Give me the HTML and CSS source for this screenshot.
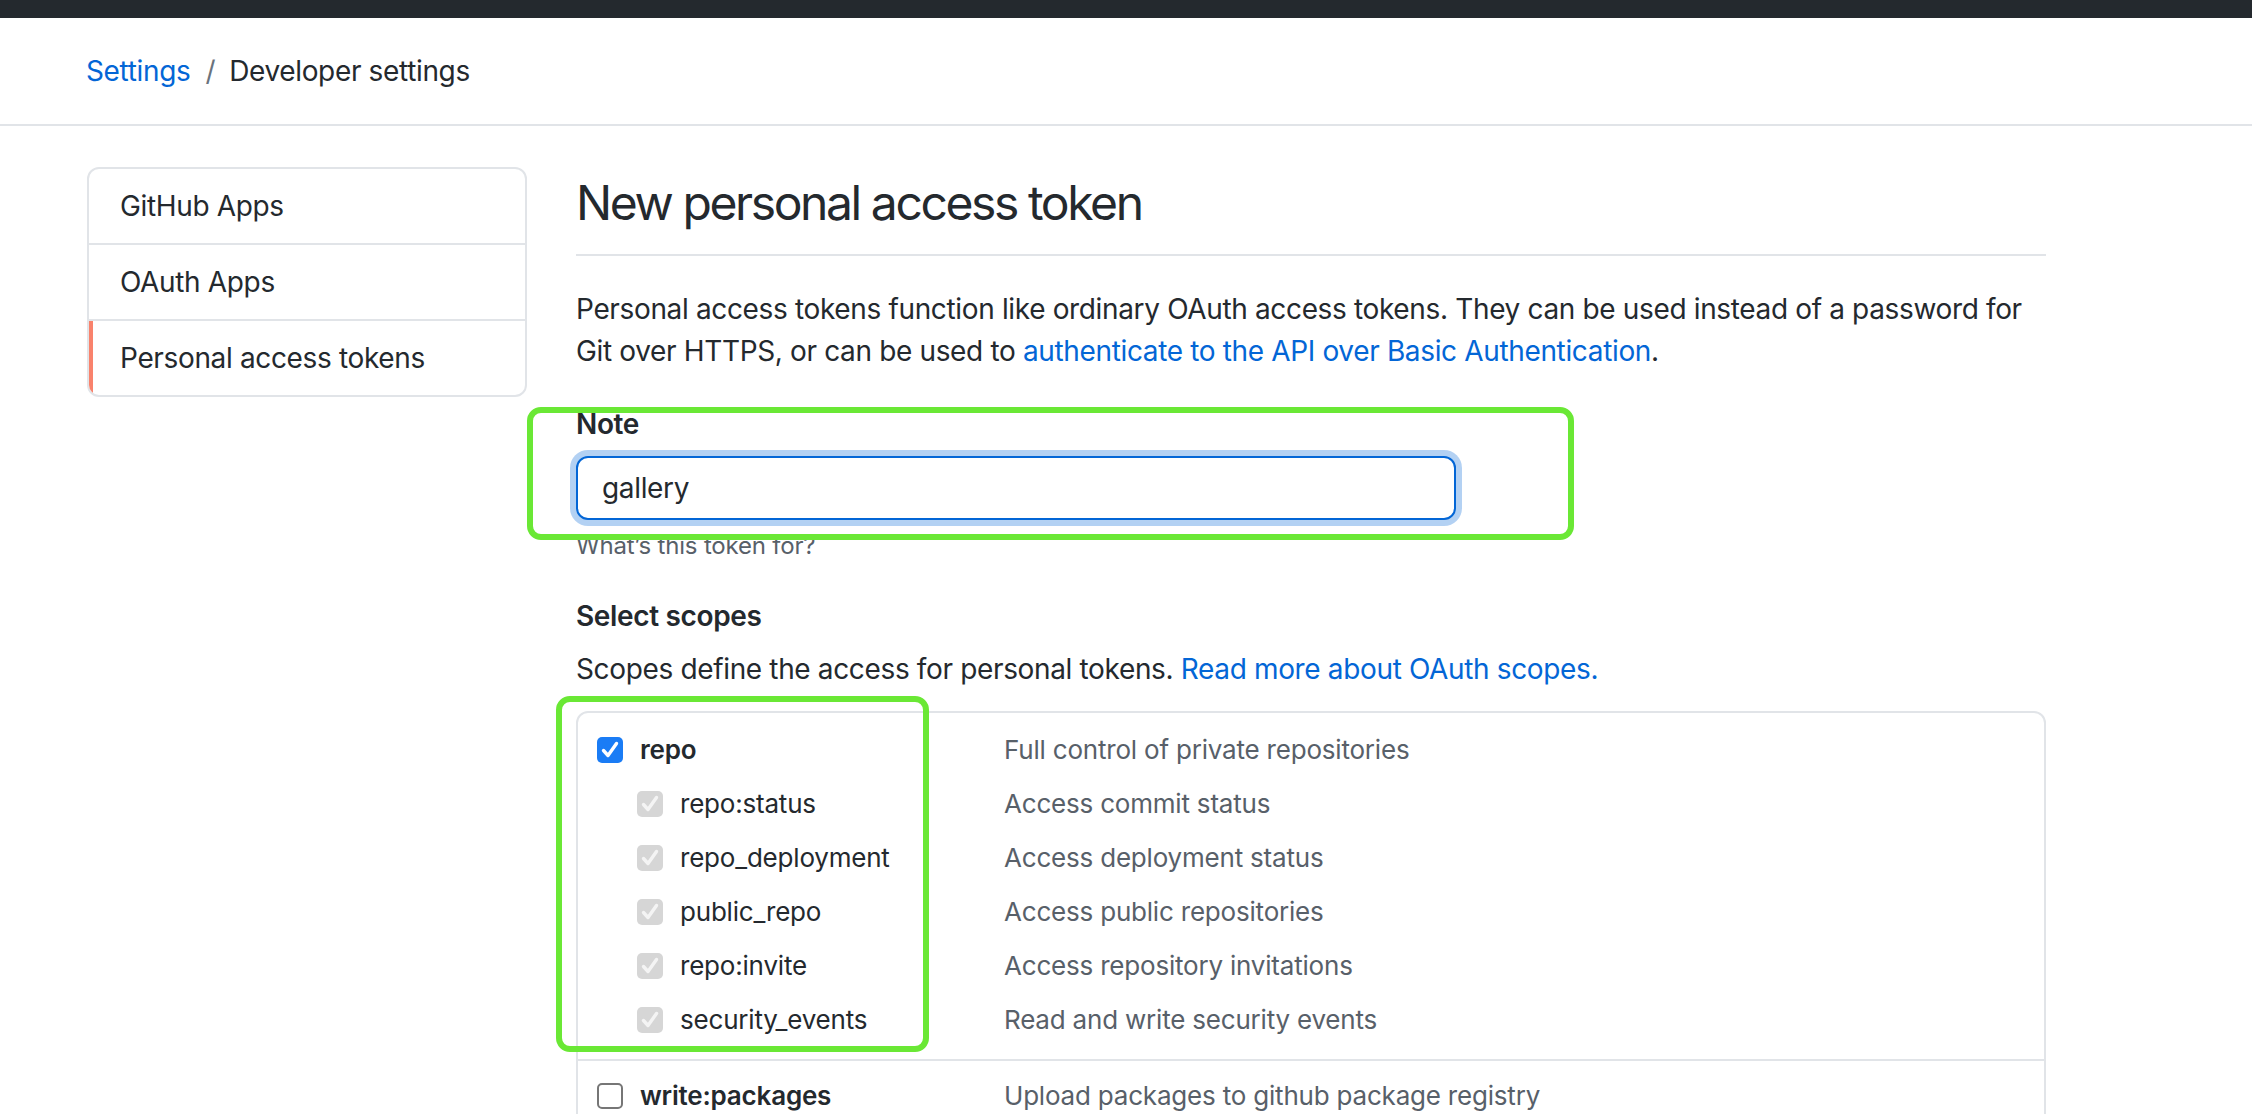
FILE: index.html
```html
<!DOCTYPE html>
<html lang="en">
<head>
<meta charset="utf-8">
<title>New personal access token</title>
<link rel="stylesheet" href="styles.css">
</head>
<body>
<div class="topbar"></div>
<div class="crumbbar">
  <nav class="crumbs">
    <a class="crumb-link" href="#">Settings</a>
    <span class="crumb-sep">/</span>
    <span class="crumb-current">Developer settings</span>
  </nav>
</div>
<div class="layout">
  <aside class="side">
    <nav class="menu">
      <a class="menu-item" href="#">GitHub Apps</a>
      <a class="menu-item" href="#">OAuth Apps</a>
      <a class="menu-item selected" href="#">Personal access tokens</a>
    </nav>
  </aside>
  <main class="main">
    <h2 class="title">New personal access token</h2>
    <p class="intro">Personal access tokens function like ordinary OAuth access tokens. They can be used instead of a password for Git over HTTPS, or can be used to <a class="link" href="#">authenticate to the API over Basic Authentication</a>.</p>
    <div class="field">
      <div class="label">Note</div>
      <input class="input" type="text" value="gallery">
      <p class="note">What’s this token for?</p>
      <span class="mark mark-note"></span>
    </div>
    <div class="label label-scopes">Select scopes</div>
    <p class="scopes-intro">Scopes define the access for personal tokens. <a class="link" href="#">Read more about OAuth scopes.</a></p>
    <div class="scopes">
      <div class="group">
        <div class="row">
          <div class="name top"><span class="cb on"><svg viewBox="0 0 26 26"><path d="M6.5 13.5l4.5 5L19.5 6.5"/></svg></span><span class="scope-main">repo</span></div>
          <div class="desc">Full control of private repositories</div>
        </div>
        <div class="row">
          <div class="name sub"><span class="cb dis"><svg viewBox="0 0 26 26"><path d="M6.5 13.5l4.5 5L19.5 6.5"/></svg></span><span>repo:status</span></div>
          <div class="desc">Access commit status</div>
        </div>
        <div class="row">
          <div class="name sub"><span class="cb dis"><svg viewBox="0 0 26 26"><path d="M6.5 13.5l4.5 5L19.5 6.5"/></svg></span><span>repo_deployment</span></div>
          <div class="desc">Access deployment status</div>
        </div>
        <div class="row">
          <div class="name sub"><span class="cb dis"><svg viewBox="0 0 26 26"><path d="M6.5 13.5l4.5 5L19.5 6.5"/></svg></span><span>public_repo</span></div>
          <div class="desc">Access public repositories</div>
        </div>
        <div class="row">
          <div class="name sub"><span class="cb dis"><svg viewBox="0 0 26 26"><path d="M6.5 13.5l4.5 5L19.5 6.5"/></svg></span><span>repo:invite</span></div>
          <div class="desc">Access repository invitations</div>
        </div>
        <div class="row">
          <div class="name sub"><span class="cb dis"><svg viewBox="0 0 26 26"><path d="M6.5 13.5l4.5 5L19.5 6.5"/></svg></span><span>security_events</span></div>
          <div class="desc">Read and write security events</div>
        </div>
      </div>
      <div class="group">
        <div class="row">
          <div class="name top"><span class="cb off"></span><span class="scope-main">write:packages</span></div>
          <div class="desc">Upload packages to github package registry</div>
        </div>
      </div>
      <span class="mark mark-scopes"></span>
    </div>
  </main>
</div>
</body>
</html>
```

FILE: styles.css
```css
* { box-sizing: border-box; }
html, body { margin: 0; padding: 0; background: #fff; }
body {
  font-family: Inter, "Liberation Sans", Arial, sans-serif;
  font-size: 28px;
  line-height: 42px;
  letter-spacing: -0.35px;
  color: #24292e;
  height: 1114px;
  overflow: hidden;
}
a { text-decoration: none; }
.link { color: #0366d6; }

.topbar { height: 18px; background: #24292e; }

.crumbbar {
  height: 108px;
  border-bottom: 2px solid #e1e4e8;
  display: flex;
  align-items: center;
  padding-left: 86px;
}
.crumbs { display: flex; align-items: center; font-size: 28px; }
.crumb-link { color: #0366d6; }
.crumb-sep { color: #6a737d; margin: 0 14px 0 15px; }
.crumb-current { color: #24292e; }

.layout {
  display: flex;
  align-items: flex-start;
  gap: 49px;
  padding: 41px 0 0 87px;
}

.side { width: 440px; flex: none; }
.menu {
  border: 2px solid #e1e4e8;
  border-radius: 12px;
  overflow: hidden;
  display: flex;
  flex-direction: column;
}
.menu-item {
  position: relative;
  display: block;
  padding: 16px 32px 16px 31px;
  line-height: 42px;
  color: #24292e;
  border-bottom: 2px solid #e1e4e8;
}
.menu-item:last-child { border-bottom: 0; }
.menu-item.selected::before {
  content: "";
  position: absolute;
  left: 0; top: 0; bottom: 0;
  width: 4px;
  background: #f9826c;
}

.main { width: 1470px; flex: none; position: relative; }

.title {
  margin: 0;
  font-size: 48px;
  font-weight: 400;
  letter-spacing: -2.4px;
  line-height: 72px;
  padding-bottom: 15px;
  border-bottom: 2px solid #e1e4e8;
}

.intro { margin: 32px 0 31px; }

.field { position: relative; }
.label { font-weight: 600; margin-bottom: 11px; }
.input {
  display: block;
  width: 880px;
  height: 64px;
  margin: 0;
  padding: 0 24px;
  font: inherit;
  letter-spacing: inherit;
  color: #24292e;
  border: 2px solid #0366d6;
  border-radius: 12px;
  box-shadow: 0 0 0 6px rgba(3, 102, 214, 0.3);
  outline: none;
  background: #fff;
}
.note {
  margin: 8px 0 0;
  font-size: 24px;
  line-height: 36px;
  letter-spacing: -0.2px;
  color: #586069;
}
.label-scopes { margin-top: 31px; }
.scopes-intro { margin: 0 0 21px; }

.scopes {
  position: relative;
  border: 2px solid #e1e4e8;
  border-radius: 12px;
  font-size: 26px;
  letter-spacing: -0.2px;
}
.group { padding: 10px 0 12px; }
.group + .group { border-top: 2px solid #e1e4e8; padding-top: 8px; }
.row {
  display: grid;
  grid-template-columns: 426px 1fr;
  height: 54px;
  align-items: center;
}
.name { display: flex; align-items: center; gap: 17px; }
.name.top { padding-left: 19px; }
.name.sub { padding-left: 59px; }
.scope-main { font-weight: 600; }
.desc { color: #586069; }

.cb {
  width: 26px;
  height: 26px;
  border-radius: 5px;
  flex: none;
  display: flex;
}
.cb svg { width: 26px; height: 26px; }
.cb path { fill: none; stroke: #fff; stroke-width: 3.4; stroke-linecap: round; stroke-linejoin: round; }
.cb.on { background: #1a7cf5; }
.cb.dis { background: #d6d6d6; }
.cb.dis path { stroke: #f4f4f4; }
.cb.off { background: #fff; border: 2px solid #767676; }

.mark {
  position: absolute;
  border: 6px solid #6ae835;
  border-radius: 14px;
  pointer-events: none;
}
.mark-note { left: -49px; top: 4px; width: 1047px; height: 133px; }
.mark-scopes { left: -22px; top: -17px; width: 373px; height: 356px; }
```
